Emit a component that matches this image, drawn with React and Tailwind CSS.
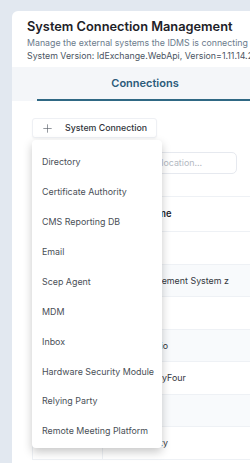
import { Plus, Search } from "lucide-react";

const menuItems = [
  "Directory",
  "Certificate Authority",
  "CMS Reporting DB",
  "Email",
  "Scep Agent",
  "MDM",
  "Inbox",
  "Hardware Security Module",
  "Relying Party",
  "Remote Meeting Platform",
];

const rows = ["AD", "Management System z", "CA", "Portfolio", "SeventyFour", "HSM", "Security"];

export default function App() {
  return (
    <div className="w-[250px] h-[463px] overflow-hidden bg-[#e2e8f0] font-['Inter',sans-serif]">
      <div className="ml-[12px] mt-[11px] w-[620px] h-[470px] bg-white rounded-tl-[6px]">
        <div className="px-[15px] pt-[7px] pb-[5px]">
          <h1 className="text-[12.8px] leading-[18px] font-semibold text-[#1d2127] whitespace-nowrap">
            System Connection Management
          </h1>
          <p className="text-[8.8px] leading-[13px] text-[#6b7b8c] whitespace-nowrap">
            Manage the external systems the IDMS is connecting to
          </p>
          <p className="text-[8.8px] leading-[13px] text-[#4b5563] whitespace-nowrap">
            System Version: IdExchange.WebApi, Version=1.11.14.2, Culture=neutral
          </p>
        </div>

        <div className="h-[34px] bg-[#f4f6f9] flex pl-[25px]">
          <div className="w-[216px] flex items-center justify-center border-b-2 border-[#2f6884] text-[11px] font-semibold text-[#2c5b79]">
            Connections
          </div>
        </div>

        <div className="relative px-[20px] pt-[17px]">
          <button className="h-[20px] w-[125px] flex items-center gap-[11px] pl-[8px] rounded-[3px] border border-[#eef0f4] bg-white shadow-[0_1px_2px_rgba(0,0,0,0.04)] text-[8.8px] font-medium text-[#30343a] whitespace-nowrap">
            <Plus size={13} strokeWidth={1.2} className="text-[#5a6069]" />
            System Connection
          </button>

          <div className="absolute left-[20px] top-[39px] w-[130px] z-10 bg-white rounded-[4px] shadow-[0_4px_10px_rgba(0,0,0,0.22)] pt-[7px] pb-[2px]">
            {menuItems.map((item) => (
              <div
                key={item}
                className="h-[29.9px] flex items-center pl-[10px] text-[8.9px] text-[#4a4f57] whitespace-nowrap"
              >
                {item}
              </div>
            ))}
          </div>

          <div className="mt-[14px] flex">
            <div className="w-[205px] h-[22px] flex items-center gap-[5px] border border-[#e6e9ef] rounded-[5px] pl-[8px] text-[8.9px] text-[#b3b9c2] whitespace-nowrap">
              <Search size={10} />
              Search by name, type or location...
            </div>
          </div>

          <div className="mt-[22px] border-t border-l border-[#eef1f5]">
            <div className="h-[35px] flex items-center border-b border-[#eef1f5] text-[9.4px] font-semibold text-[#23272e]">
              <div className="w-[70px] h-full border-r border-[#eef1f5]" />
              <div className="pl-[42px]">Name</div>
            </div>
            {rows.map((name, i) => (
              <div
                key={name}
                className={
                  "h-[32.5px] flex items-center border-b border-[#eef1f5] text-[8.9px] text-[#33373d] " +
                  (i % 2 === 1 ? "bg-[#f8fafc]" : "bg-white")
                }
              >
                <div className="w-[70px] h-full border-r border-[#eef1f5]" />
                <div className="pl-[30px] whitespace-nowrap">{name}</div>
              </div>
            ))}
          </div>
        </div>
      </div>
    </div>
  );
}
